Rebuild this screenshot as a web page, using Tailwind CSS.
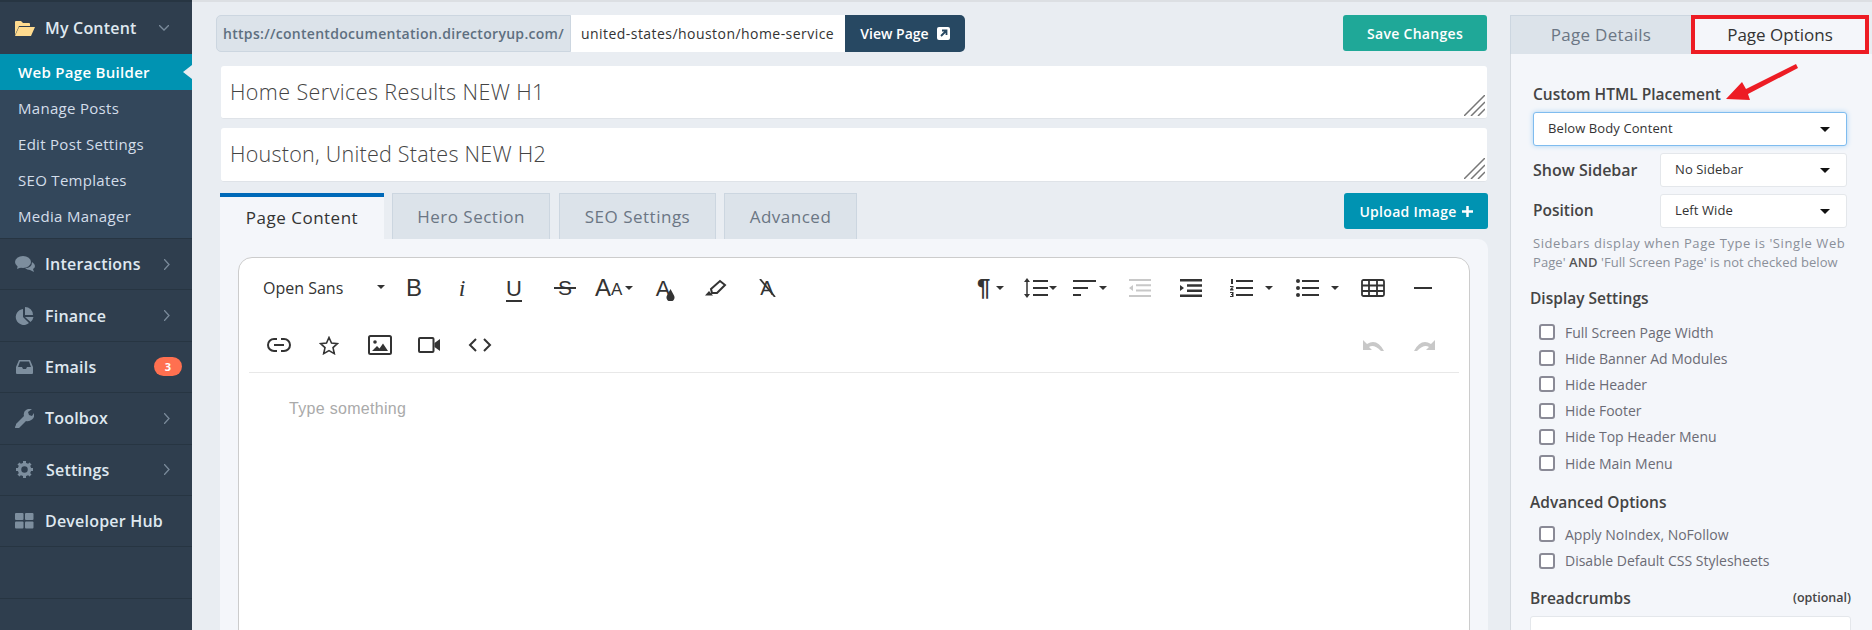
<!DOCTYPE html>
<html lang="en">
<head>
  <meta charset="UTF-8">
  <title>Web Page Builder</title>
  <script src="https://cdn.jsdelivr.net/npm/@tailwindcss/browser@4"></script>
</head>
<body>
  <div class="flex h-[630px] w-[1872px] overflow-hidden bg-[#e9edf2] font-['Open_Sans',sans-serif] relative">
    <!-- Sidebar -->
    <aside class="w-[192px] shrink-0 h-full bg-[#2f3e4e] text-[#dfe8f0] border-t-2 border-[#273542] tracking-[0.2px]">
      <div class="h-[52px] flex items-center pl-[14px] text-[16px] font-semibold">
        <svg class="w-[21px] h-[18px] mr-[10px]" viewBox="0 0 21 18"><path fill="#ffdb8f" d="M1 16V3q0-1 1-1h5l2 2h6q1 0 1 1v2H5L1 16zm4-8h16l-4 9H1z"/></svg>
        My Content
        <svg class="w-[10px] h-[6px] ml-[22px]" viewBox="0 0 10 6" fill="none" stroke="#7a8a9a" stroke-width="1.3"><path d="M0 0l5 5 5-5"/></svg>
      </div>
      <div class="h-[185px] bg-[#33475b] border-b border-[#273542] text-[15px] text-[#d3deea] tracking-[0.3px]">
        <div class="h-[36px] bg-[#0093b2] flex items-center pl-[18px] text-white font-semibold relative">
          Web Page Builder
          <span class="absolute right-0 top-[11px] border-y-[7px] border-y-transparent border-r-[9px] border-r-[#e9edf2]"></span>
        </div>
        <div class="h-[36px] flex items-center pl-[18px]">Manage Posts</div>
        <div class="h-[36px] flex items-center pl-[18px]">Edit Post Settings</div>
        <div class="h-[36px] flex items-center pl-[18px]">SEO Templates</div>
        <div class="h-[36px] flex items-center pl-[18px]">Media Manager</div>
      </div>
      <div class="h-[51.4px] flex items-center pl-[15px] pr-[22px] border-b border-[#273542] text-[16px] font-semibold">
        <svg class="w-[20px] h-[16px] mr-[10px]" viewBox="0 0 20 16" fill="#7d8e9e"><ellipse cx="8" cy="6" rx="8" ry="6"/><path d="M3 9l-1 4 5-2zM17 6q3 2 3 4t-2 3l1 3-4-2q-3 0-5-2 7 0 7-6z"/></svg>
        <span class="flex-1">Interactions</span>
        <svg class="w-[6px] h-[11px]" viewBox="0 0 6 11" fill="none" stroke="#7a8a9a" stroke-width="1.3"><path d="M0 0l5 5.500-5 5.500"/></svg>
      </div>
      <div class="h-[51.4px] flex items-center pl-[15px] pr-[22px] border-b border-[#273542] text-[16px] font-semibold">
        <svg class="w-[19px] h-[18px] mr-[11px]" viewBox="0 0 19 18" fill="#7d8e9e"><path d="M8 2v8l6 6a8 8 0 1 1-6-14zM10 0a8 8 0 0 1 8 8h-8zM10 10h8.500a8 8 0 0 1-3 5z"/></svg>
        <span class="flex-1">Finance</span>
        <svg class="w-[6px] h-[11px]" viewBox="0 0 6 11" fill="none" stroke="#7a8a9a" stroke-width="1.3"><path d="M0 0l5 5.500-5 5.500"/></svg>
      </div>
      <div class="h-[51.4px] flex items-center pl-[16px] pr-[10px] border-b border-[#273542] text-[16px] font-semibold">
        <svg class="w-[17px] h-[14px] mr-[12px]" viewBox="0 0 17 14" fill="#7d8e9e"><path d="M3 0h11l3 7v6q0 1-1 1H1q-1 0-1-1V7zM4 1.500L2 7h4l1 2h3l1-2h4l-2-5.500z"/></svg>
        <span class="flex-1">Emails</span>
        <span class="w-[28px] h-[19px] rounded-full bg-[#ff7050] text-white text-[11px] font-bold flex items-center justify-center">3</span>
      </div>
      <div class="h-[51.4px] flex items-center pl-[15px] pr-[22px] border-b border-[#273542] text-[16px] font-semibold">
        <svg class="w-[19px] h-[19px] mr-[11px]" viewBox="0 0 19 19" fill="#7d8e9e"><path d="M1 15l8-8q-1-4 2-6t6-1l-4 3 1 3 3 1 2-3q1 4-2 6.500t-6 1.500l-8 8q-2 1-3-1 0-2 1-3z"/></svg>
        <span class="flex-1">Toolbox</span>
        <svg class="w-[6px] h-[11px]" viewBox="0 0 6 11" fill="none" stroke="#7a8a9a" stroke-width="1.3"><path d="M0 0l5 5.500-5 5.500"/></svg>
      </div>
      <div class="h-[51.4px] flex items-center pl-[16px] pr-[22px] border-b border-[#273542] text-[16px] font-semibold">
        <svg class="w-[17px] h-[17px] mr-[13px]" viewBox="0 0 17 17"><circle cx="8.500" cy="8.500" r="5" fill="none" stroke="#7d8e9e" stroke-width="3.500"/><path stroke="#7d8e9e" stroke-width="3" d="M8.500 0v3M8.500 14v3M0 8.500h3M14 8.500h3M2.500 2.500l2 2M12.500 12.500l2 2M2.500 14.500l2-2M12.500 4.500l2-2"/></svg>
        <span class="flex-1">Settings</span>
        <svg class="w-[6px] h-[11px]" viewBox="0 0 6 11" fill="none" stroke="#7a8a9a" stroke-width="1.3"><path d="M0 0l5 5.500-5 5.500"/></svg>
      </div>
      <div class="h-[51.4px] flex items-center pl-[15px] border-b border-[#273542] text-[16px] font-semibold">
        <svg class="w-[19px] h-[16px] mr-[11px]" viewBox="0 0 19 16" fill="#7d8e9e"><rect width="8.500" height="7" rx="1"/><rect x="10" width="8.500" height="7" rx="1"/><rect y="8.500" width="8.500" height="7" rx="1"/><rect x="10" y="8.500" width="8.500" height="7" rx="1"/></svg>
        Developer Hub
      </div>
      <div class="h-[51.4px] border-b border-[#273542]"></div>
    </aside>

    <!-- Main column -->
    <main class="w-[1318px] shrink-0 border-t-2 border-[#dcdfe3] pl-[24px] pr-[22px] pt-[13px]">
      <div class="flex justify-between h-[37px] mr-[1px]">
        <div class="flex text-[14px] font-semibold">
          <span class="w-[355px] bg-[#dce3ea] border border-[#ccd6e0] rounded-l-[5px] flex items-center pl-[6px] text-[#5e6f80] whitespace-nowrap tracking-[0.3px]">https://contentdocumentation.directoryup.com/</span>
          <span class="w-[274px] bg-white flex items-center pl-[10px] text-[#333] whitespace-nowrap overflow-hidden font-medium tracking-[0.45px]">united-states/houston/home-service</span>
          <span class="w-[120px] bg-[#274862] rounded-r-[5px] text-white flex items-center justify-center gap-[8px]">View Page
            <svg class="w-[13px] h-[13px]" viewBox="0 0 13 13"><rect width="13" height="13" rx="2" fill="#fff"/><path d="M4 9l5-5M5 3.500h4.500V8" fill="none" stroke="#274862" stroke-width="1.800"/></svg>
          </span>
        </div>
        <button class="w-[144px] h-[36px] bg-[#1fa898] rounded-[3px] text-white text-[14px] font-semibold tracking-[0.3px]">Save Changes</button>
      </div>
      <div class="ml-[5px] mr-[1px] mt-[14px] h-[53px] bg-white border-b border-[#dfe3e8] rounded-[3px] flex items-center pl-[9px] text-[21.5px] font-light tracking-[0.4px] text-[#444] relative">Home Services Results NEW H1
        <svg class="absolute right-[2px] bottom-[2px] w-[21px] h-[21px]" viewBox="0 0 21 21" stroke="#777" stroke-width="1.500"><path d="M0 21L21 0M7 21L21 7M14 21l7-7"/></svg>
      </div>
      <div class="ml-[5px] mr-[1px] mt-[9px] h-[54px] bg-white border-b border-[#dfe3e8] rounded-[3px] flex items-center pl-[9px] text-[21.5px] font-light tracking-[0.25px] text-[#444] relative">Houston, United States NEW H2
        <svg class="absolute right-[2px] bottom-[2px] w-[21px] h-[21px]" viewBox="0 0 21 21" stroke="#777" stroke-width="1.500"><path d="M0 21L21 0M7 21L21 7M14 21l7-7"/></svg>
      </div>
      <div class="ml-[4px] mt-[11px] h-[46px] flex items-start text-[17px] font-medium tracking-[0.5px]">
        <div class="w-[164px] h-[46px] bg-[#f4f6fa] border-t-4 border-[#0069b8] flex items-center justify-center text-[#333]">Page Content</div>
        <div class="w-[158px] ml-[8px] h-[46px] bg-[#dce3ea] border border-[#ccd6e0] border-b-0 flex items-center justify-center text-[#6b7684]">Hero Section</div>
        <div class="w-[157px] ml-[9px] h-[46px] bg-[#dce3ea] border border-[#ccd6e0] border-b-0 flex items-center justify-center text-[#6b7684]">SEO Settings</div>
        <div class="w-[133px] ml-[8px] h-[46px] bg-[#dce3ea] border border-[#ccd6e0] border-b-0 flex items-center justify-center text-[#6b7684]">Advanced</div>
        <button class="ml-auto w-[144px] h-[36px] bg-[#0093b2] rounded-[3px] text-white text-[14px] font-semibold tracking-[0.3px] flex items-center justify-center gap-[5px]">Upload Image
          <svg class="w-[11px] h-[11px]" viewBox="0 0 11 11" stroke="#fff" stroke-width="2.500"><path d="M5.500 0v11M0 5.500h11"/></svg>
        </button>
      </div>
      <!-- Editor panel -->
      <div class="ml-[4px] h-[391px] bg-[#f4f6fa] rounded-tr-[10px] pt-[18px] pl-[18px] pr-[18px]">
        <div class="h-[400px] bg-white border border-[#cccccc] rounded-[14px] font-['Liberation_Sans',sans-serif] text-[#333]">
          <!-- Toolbar row 1 -->
          <div class="h-[60px] flex items-center text-[24px]">
            <div class="w-[151px] pl-[24px] flex items-center font-['Open_Sans',sans-serif] text-[16px] relative">Open Sans
              <span class="absolute left-[138px] top-[9px] border-x-[4px] border-x-transparent border-t-[4px] border-t-[#333]"></span>
            </div>
            <div class="w-[48px] text-center">B</div>
            <div class="w-[48px] text-center italic font-['Liberation_Serif',serif]">i</div>
            <div class="w-[56px] text-center"><span class="border-b-2 border-[#333] text-[22px] leading-[22px] inline-block">U</span></div>
            <div class="w-[46px] flex justify-center relative"><span class="text-[21px]">S</span><span class="absolute left-[12px] top-[15px] w-[22px] h-[2px] bg-[#333]"></span></div>
            <div class="w-[52px] flex items-center pl-[7px]"><span class="text-[24px]">A</span><span class="text-[17px] mt-[3px]">A</span><span class="ml-[3px] border-x-[4px] border-x-transparent border-t-[4px] border-t-[#333]"></span></div>
            <div class="w-[50px] flex justify-center relative"><span class="text-[22px] -ml-[4px]">A</span>
              <svg class="absolute left-[26px] top-[17px] w-[9px] h-[12px]" viewBox="0 0 9 12" fill="#333"><path d="M4.500 0L8 6.500a4 4 0 1 1-7 0z"/></svg>
            </div>
            <div class="w-[52px] flex justify-center">
              <svg class="w-[22px] h-[18px]" viewBox="0 0 22 18"><path fill="none" stroke="#333" stroke-width="2" d="M6 10L15 2l5 4-8 8H7z"/><path fill="#333" d="M4 12l4 4.500H0z"/></svg>
            </div>
            <div class="w-[50px] flex justify-center relative"><span class="text-[20px]">A</span>
              <svg class="absolute left-[16px] top-[6px] w-[18px] h-[18px]" viewBox="0 0 18 18" stroke="#333" stroke-width="1.800"><path d="M2 0l15 18"/></svg>
            </div>
            <div class="ml-[172px] w-[49px] flex items-center pl-[13px]"><span class="font-bold text-[24px]">¶</span><span class="ml-[6px] border-x-[4px] border-x-transparent border-t-[4px] border-t-[#333]"></span></div>
            <div class="w-[52px] flex items-center pl-[11px]">
              <svg class="w-[24px] h-[20px]" viewBox="0 0 24 20" fill="#333"><path d="M3 2v16" stroke="#333" stroke-width="1.500"/><path d="M3 0l3 4H0zM3 20l3-4H0zM9 2h15v2H9zM9 9h15v2H9zM9 16h15v2H9z"/></svg>
              <span class="ml-[1px] border-x-[4px] border-x-transparent border-t-[4px] border-t-[#333]"></span>
            </div>
            <div class="w-[49px] flex items-center pl-[8px]">
              <svg class="w-[23px] h-[16px]" viewBox="0 0 23 16" fill="#333"><path d="M0 0h23v2H0zM0 7h15v2H0zM0 14h8v2H0z"/></svg>
              <span class="ml-[3px] border-x-[4px] border-x-transparent border-t-[4px] border-t-[#333]"></span>
            </div>
            <div class="w-[51px] flex justify-center">
              <svg class="w-[22px] h-[18px]" viewBox="0 0 22 18" fill="#c8c8c8"><path d="M0 0h22v2H0zM7 5.300h15v2H7zM7 10.600h15v2H7zM0 16h22v2H0zM4 6v6L0 9z"/></svg>
            </div>
            <div class="w-[52px] flex justify-center">
              <svg class="w-[22px] h-[18px]" viewBox="0 0 22 18" fill="#333"><path d="M0 0h22v2.500H0zM7 5.300h15v2.500H7zM7 10.600h15v2.500H7zM0 15.500h22V18H0zM0 6v6l4-3z"/></svg>
            </div>
            <div class="w-[66px] flex items-center pl-[13px]">
              <svg class="w-[23px] h-[18px]" viewBox="0 0 23 18" fill="#333"><path d="M6 1h17v2H6zM6 8h17v2H6zM6 15h17v2H6zM1 0h2v5H1zM0 7h3.500v1.500H2l1.500 2v1H0v-1l2-2.500H0zM0 13h3.500v5H0v-1h2v-1H1v-1h1v-1H0z"/></svg>
              <span class="ml-[12px] border-x-[4px] border-x-transparent border-t-[4px] border-t-[#333]"></span>
            </div>
            <div class="w-[65px] flex items-center pl-[13px]">
              <svg class="w-[23px] h-[18px]" viewBox="0 0 23 18" fill="#333"><circle cx="2" cy="2" r="2"/><circle cx="2" cy="9" r="2"/><circle cx="2" cy="16" r="2"/><path d="M6 1h17v2H6zM6 8h17v2H6zM6 15h17v2H6z"/></svg>
              <span class="ml-[12px] border-x-[4px] border-x-transparent border-t-[4px] border-t-[#333]"></span>
            </div>
            <div class="w-[50px] flex justify-center">
              <svg class="w-[24px] h-[18px]" viewBox="0 0 24 18" fill="none" stroke="#333" stroke-width="1.800"><rect x="1" y="1" width="22" height="16" rx="1.500"/><path d="M1 6.500h22M1 12h22M8 1v16M16 1v16"/></svg>
            </div>
            <div class="w-[50px] flex justify-center">
              <span class="w-[18px] h-[2px] bg-[#333]"></span>
            </div>
          </div>
          <!-- Toolbar row 2 -->
          <div class="h-[55px] mx-[10px] border-b border-[#e8e8e8] flex items-center">
            <div class="w-[50px] ml-[5px] flex justify-center">
              <svg class="w-[24px] h-[14px]" viewBox="0 0 24 14" fill="none" stroke="#333" stroke-width="2"><path d="M10 1H7a6 6 0 0 0 0 12h3M14 1h3a6 6 0 0 1 0 12h-3M7 7h10"/></svg>
            </div>
            <div class="w-[50px] flex justify-center">
              <svg class="w-[20px] h-[19px]" viewBox="0 0 20 19" fill="none" stroke="#333" stroke-width="1.600"><path d="M10 1.500l2.500 5.500 6 .6-4.500 4 1.300 6-5.300-3-5.300 3 1.300-6-4.500-4 6-.6z"/></svg>
            </div>
            <div class="w-[52px] flex justify-center">
              <svg class="w-[24px] h-[20px]" viewBox="0 0 24 20"><rect x="1" y="1" width="22" height="18" rx="1.500" fill="none" stroke="#333" stroke-width="2"/><circle cx="7" cy="7" r="1.800" fill="#333"/><path fill="#333" d="M4 16l5-5 2.500 2.500 3.500-5 5 7.500z"/></svg>
            </div>
            <div class="w-[46px] flex justify-center">
              <svg class="w-[22px] h-[16px]" viewBox="0 0 22 16"><rect x="1" y="1" width="14.500" height="14" rx="1" fill="none" stroke="#333" stroke-width="2"/><path fill="#333" d="M16.500 6L22 2v12l-5.500-4z"/></svg>
            </div>
            <div class="w-[56px] flex justify-center">
              <svg class="w-[24px] h-[14px]" viewBox="0 0 24 14" fill="none" stroke="#333" stroke-width="2"><path d="M8 1L2 7l6 6M16 1l6 6-6 6"/></svg>
            </div>
            <div class="ml-[841px] w-[50px] flex justify-center">
              <svg class="w-[22px] h-[11px]" viewBox="0 0 22 11" fill="#c8c8c8"><path d="M0 0v10h9L6 7q5-3 12 4h3Q14-2 4 4z"/></svg>
            </div>
            <div class="w-[50px] flex justify-center">
              <svg class="w-[22px] h-[11px]" viewBox="0 0 22 11" fill="#c8c8c8"><path d="M22 0v10h-9l3-3q-5-3-12 4H1Q8-2 18 4z"/></svg>
            </div>
          </div>
          <div class="pl-[50px] pt-[24px] text-[16px] text-[#aaaaaa] tracking-[0.3px]">Type something</div>
        </div>
      </div>
    </main>

    <!-- Right panel -->
    <section class="w-[362px] shrink-0 border-t-2 border-[#dcdfe3] pt-[13px]">
      <div class="flex h-[39px] text-[17px] font-medium">
        <div class="w-[181px] bg-[#dce3ea] border-l border-t border-[#ccd6e0] flex items-center justify-center text-[#6b7684] tracking-[0.3px]">Page Details</div>
        <div class="w-[178px] bg-[#f4f6fa] border-4 border-[#ed1c24] flex items-center justify-center text-[#333]">Page Options</div>
      </div>
      <div class="h-[600px] bg-[#f4f6fa] border-l border-[#d5dae0] pl-[22px] pr-[21px] pt-[29px] text-[#444]">
        <div class="text-[15.5px] font-semibold leading-[22px]">Custom HTML Placement</div>
        <div class="mt-[7px] h-[34px] w-[314px] bg-white border border-[#7fbcef] rounded-[3px] shadow-[0_0_5px_#a9d3f5] flex items-center justify-between pl-[14px] pr-[16px] text-[13px] font-medium tracking-[0.1px] text-[#333]">Below Body Content
          <span class="border-x-[5px] border-x-transparent border-t-[5px] border-t-[#111]"></span>
        </div>
        <div class="mt-[7px] flex items-center justify-between w-[314px]">
          <span class="text-[16px] font-semibold">Show Sidebar</span>
          <div class="h-[34px] w-[187px] bg-white border border-[#e4e7eb] rounded-[3px] flex items-center justify-between pl-[14px] pr-[16px] text-[13px] font-medium tracking-[0.1px] text-[#333]">No Sidebar
            <span class="border-x-[5px] border-x-transparent border-t-[5px] border-t-[#111]"></span>
          </div>
        </div>
        <div class="mt-[7px] flex items-center justify-between w-[314px]">
          <span class="text-[15.5px] font-semibold">Position</span>
          <div class="h-[34px] w-[187px] bg-white border border-[#e4e7eb] rounded-[3px] flex items-center justify-between pl-[14px] pr-[16px] text-[13px] font-medium tracking-[0.1px] text-[#333]">Left Wide
            <span class="border-x-[5px] border-x-transparent border-t-[5px] border-t-[#111]"></span>
          </div>
        </div>
        <p class="mt-[6px] w-[320px] text-[13px] leading-[19px] text-[#8a8f99] whitespace-nowrap"><span class="tracking-[0.58px]">Sidebars display when Page Type is 'Single Web</span><br><span class="tracking-[0.07px]">Page' <b class="font-semibold text-[#555]">AND</b> 'Full Screen Page' is not checked below</span></p>
        <div class="-ml-[3px] mt-[15px] text-[15.5px] font-semibold leading-[22px]">Display Settings</div>
        <div class="mt-[10px] flex flex-col text-[14px] text-[#6b6b75]">
          <label class="h-[26.200px] flex items-center pl-[6px] gap-[10px]"><input type="checkbox" class="appearance-none w-[16px] h-[16px] border-2 border-[#8a8a96] rounded-[3px] bg-white">Full Screen Page Width</label>
          <label class="h-[26.200px] flex items-center pl-[6px] gap-[10px]"><input type="checkbox" class="appearance-none w-[16px] h-[16px] border-2 border-[#8a8a96] rounded-[3px] bg-white">Hide Banner Ad Modules</label>
          <label class="h-[26.200px] flex items-center pl-[6px] gap-[10px]"><input type="checkbox" class="appearance-none w-[16px] h-[16px] border-2 border-[#8a8a96] rounded-[3px] bg-white">Hide Header</label>
          <label class="h-[26.200px] flex items-center pl-[6px] gap-[10px]"><input type="checkbox" class="appearance-none w-[16px] h-[16px] border-2 border-[#8a8a96] rounded-[3px] bg-white">Hide Footer</label>
          <label class="h-[26.200px] flex items-center pl-[6px] gap-[10px]"><input type="checkbox" class="appearance-none w-[16px] h-[16px] border-2 border-[#8a8a96] rounded-[3px] bg-white">Hide Top Header Menu</label>
          <label class="h-[26.200px] flex items-center pl-[6px] gap-[10px]"><input type="checkbox" class="appearance-none w-[16px] h-[16px] border-2 border-[#8a8a96] rounded-[3px] bg-white">Hide Main Menu</label>
        </div>
        <div class="-ml-[3px] mt-[15px] text-[15.5px] font-semibold leading-[22px]">Advanced Options</div>
        <div class="mt-[8px] flex flex-col text-[14px] text-[#6b6b75]">
          <label class="h-[26.500px] flex items-center pl-[6px] gap-[10px]"><input type="checkbox" class="appearance-none w-[16px] h-[16px] border-2 border-[#8a8a96] rounded-[3px] bg-white">Apply NoIndex, NoFollow</label>
          <label class="h-[26.500px] flex items-center pl-[6px] gap-[10px]"><input type="checkbox" class="appearance-none w-[16px] h-[16px] border-2 border-[#8a8a96] rounded-[3px] bg-white">Disable Default CSS Stylesheets</label>
        </div>
        <div class="-ml-[3px] mt-[13px] flex items-center justify-between leading-[22px]">
          <span class="text-[15.5px] font-semibold">Breadcrumbs</span>
          <span class="text-[12.5px] font-semibold">(optional)</span>
        </div>
        <div class="-ml-[3px] mt-[7px] h-[60px] bg-white border border-[#e4e7eb] rounded-[3px]"></div>
      </div>
    </section>

    <!-- Red annotation arrow -->
    <svg class="absolute left-[1720px] top-[60px] w-[84px] h-[50px]" viewBox="0 0 84 50" fill="#ed1c24"><path d="M6 39L22 22l4 7L76 4l2 4L28 34l2 6z"/></svg>
  </div>
</body>
</html>
